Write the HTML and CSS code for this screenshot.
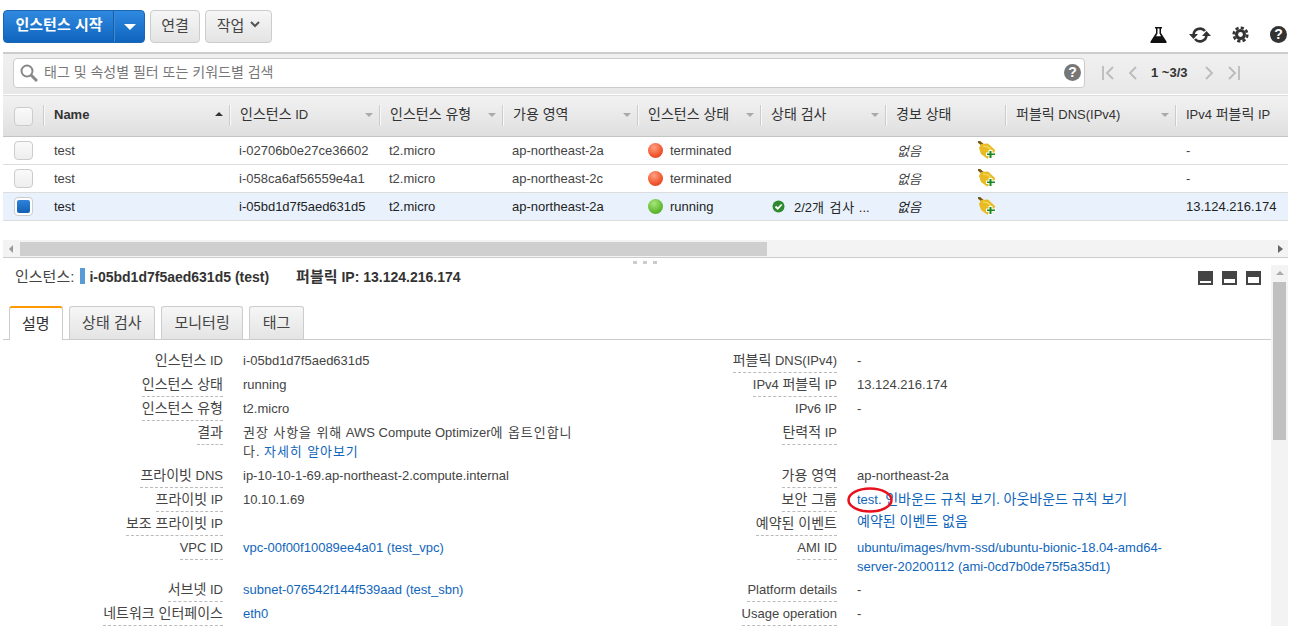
FILE: index.html
```html
<!DOCTYPE html>
<html lang="ko">
<head>
  <meta charset="UTF-8">
  <title>인스턴스</title>
  <link rel="stylesheet" href="styles.css">
</head>
<body>
  <svg class="defs" width="0" height="0">
    <symbol id="broom" viewBox="0 0 18 18">
      <path d="M0 0l6 5" stroke="#7a5a10" stroke-width="2.800"/>
      <path d="M3 3l7-.5 7 6.500-1 6-7 2.500-6-4.500-2-6z" fill="#e9bb22"/>
      <path d="M5 5l5 1 3 3" fill="none" stroke="#f7dc68" stroke-width="1.200"/>
      <path d="M10.500 9h4v2.500H18V15h-3.500v3h-4v-3H8v-3.500h2.500z" fill="#fff"/>
      <path d="M11.500 10h2v2.500H17V14h-3.500v3h-2v-3H9v-1.500h2.500z" fill="#168a1e"/>
    </symbol>
  </svg>

  <div class="console">
    <div class="toolbar">
      <div class="actions">
        <div class="btn-split">
          <span class="btn-main">인스턴스 시작</span>
          <span class="btn-caret"><i class="caret-white"></i></span>
        </div>
        <span class="btn btn-connect">연결</span>
        <span class="btn btn-action">작업
          <svg class="chevron" width="10" height="7" viewBox="0 0 10 7"><path d="M1 1l4 4 4-4" fill="none" stroke="#555" stroke-width="2"/></svg>
        </span>
      </div>
      <div class="tools">
        <svg class="flask" width="17" height="17" viewBox="0 0 17 17"><path d="M5 1h7v1.500h-1V7l5.500 8.500V17H.5v-1.500L6 7V2.500H5z" fill="#111"/><path d="M7.500 2.500h2V7.500l1.500 2.700H6l1.500-2.700z" fill="#fff"/></svg>
        <svg width="22" height="18" viewBox="0 0 22 18"><path d="M4.500 9a6.500 6.500 0 0 1 11.500-4" fill="none" stroke="#333" stroke-width="2.600"/><path d="M17.500 9a6.500 6.500 0 0 1-11.500 4" fill="none" stroke="#333" stroke-width="2.600"/><path d="M0 8h9l-4.500 5zM22 10h-9l4.500-5z" fill="#333"/></svg>
        <svg width="17" height="17" viewBox="0 0 17 17"><circle cx="8.500" cy="8.500" r="5.500" fill="#333"/><circle cx="8.500" cy="8.500" r="6.800" fill="none" stroke="#333" stroke-width="2.600" stroke-dasharray="3.200 2.140"/><circle cx="8.500" cy="8.500" r="2.400" fill="#fff"/></svg>
        <span class="help">?</span>
      </div>
    </div>

    <div class="filter-bar">
      <div class="search">
        <svg width="18" height="18" viewBox="0 0 18 18"><circle cx="7" cy="7" r="5.500" fill="none" stroke="#888" stroke-width="2"/><path d="M11 11l6 6" stroke="#888" stroke-width="3"/></svg>
        <span class="placeholder">태그 및 속성별 필터 또는 키워드별 검색</span>
        <span class="help help-grey">?</span>
      </div>
      <div class="pager">
        <svg width="12" height="14" viewBox="0 0 12 14"><path d="M1 0v14M11 1L5 7l6 6" fill="none" stroke="#bbb" stroke-width="1.800"/></svg>
        <svg width="9" height="14" viewBox="0 0 9 14"><path d="M8 1L2 7l6 6" fill="none" stroke="#bbb" stroke-width="1.800"/></svg>
        <span class="pager-count">1 ~3/3</span>
        <svg width="9" height="14" viewBox="0 0 9 14"><path d="M1 1l6 6-6 6" fill="none" stroke="#bbb" stroke-width="1.800"/></svg>
        <svg width="12" height="14" viewBox="0 0 12 14"><path d="M11 0v14M1 1l6 6-6 6" fill="none" stroke="#bbb" stroke-width="1.800"/></svg>
      </div>
    </div>

    <div class="table-head cols">
      <div class="th th-check"><i class="check"></i></div>
      <div class="th th-name">Name<i class="sort-up"></i></div>
      <div class="th"><span class="ko">인스턴스</span> ID<i class="sort"></i></div>
      <div class="th"><span class="ko">인스턴스 유형</span><i class="sort"></i></div>
      <div class="th"><span class="ko">가용 영역</span><i class="sort"></i></div>
      <div class="th"><span class="ko">인스턴스 상태</span><i class="sort"></i></div>
      <div class="th"><span class="ko">상태 검사</span><i class="sort"></i></div>
      <div class="th"><span class="ko">경보 상태</span></div>
      <div class="th"><span class="ko">퍼블릭</span> DNS(IPv4)<i class="sort"></i></div>
      <div class="th">IPv4 <span class="ko">퍼블릭</span> IP</div>
    </div>

    <div class="table-row cols">
      <div class="td td-check"><i class="check"></i></div>
      <div class="td td-name">test</div>
      <div class="td">i-02706b0e27ce36602</div>
      <div class="td">t2.micro</div>
      <div class="td">ap-northeast-2a</div>
      <div class="td td-state"><i class="dot dot-red"></i>terminated</div>
      <div class="td"></div>
      <div class="td td-alarm"><em>없음</em><svg class="broom" width="18" height="18"><use href="#broom"/></svg></div>
      <div class="td"></div>
      <div class="td td-ip">-</div>
    </div>
    <div class="table-row cols">
      <div class="td td-check"><i class="check"></i></div>
      <div class="td td-name">test</div>
      <div class="td">i-058ca6af56559e4a1</div>
      <div class="td">t2.micro</div>
      <div class="td">ap-northeast-2c</div>
      <div class="td td-state"><i class="dot dot-red"></i>terminated</div>
      <div class="td"></div>
      <div class="td td-alarm"><em>없음</em><svg class="broom" width="18" height="18"><use href="#broom"/></svg></div>
      <div class="td"></div>
      <div class="td td-ip">-</div>
    </div>
    <div class="table-row table-row-on cols">
      <div class="td td-check"><i class="check check-on"></i></div>
      <div class="td td-name">test</div>
      <div class="td">i-05bd1d7f5aed631d5</div>
      <div class="td">t2.micro</div>
      <div class="td">ap-northeast-2a</div>
      <div class="td td-state"><i class="dot dot-green"></i>running</div>
      <div class="td td-status"><svg width="13" height="13" viewBox="0 0 13 13"><circle cx="6.500" cy="6.500" r="6" fill="#2f8a2f"/><path d="M3.500 6.500l2.200 2.200 4-4.200" fill="none" stroke="#fff" stroke-width="1.800"/></svg><span>2/2<span class="ko-wide">개 검사</span> ...</span></div>
      <div class="td td-alarm"><em>없음</em><svg class="broom" width="18" height="18"><use href="#broom"/></svg></div>
      <div class="td"></div>
      <div class="td td-ip">13.124.216.174</div>
    </div>

    <div class="hscroll">
      <i class="arrow-left"></i>
      <div class="hscroll-thumb"></div>
      <i class="arrow-right"></i>
    </div>

    <div class="detail">
      <div class="grip"><i></i><i></i><i></i></div>
      <div class="detail-main">
        <div class="detail-title">
          <span class="title-text">
            <span class="ko-title">인스턴스:</span><i class="title-mark"></i><b>i-05bd1d7f5aed631d5 (test)</b>
            <b class="title-ip"><span class="ko-title">퍼블릭</span> IP: 13.124.216.174</b>
          </span>
          <span class="panes">
            <i class="pane pane-sm"></i><i class="pane pane-md"></i><i class="pane pane-lg"></i>
          </span>
        </div>

        <div class="tabs">
          <span class="tab tab-on">설명</span>
          <span class="tab">상태 검사</span>
          <span class="tab">모니터링</span>
          <span class="tab">태그</span>
        </div>

        <div class="info">
          <div class="key"><span><span class="ko">인스턴스</span> ID</span></div>
          <div class="val">i-05bd1d7f5aed631d5</div>
          <div class="key"><span class="dash"><span class="ko">퍼블릭</span> DNS(IPv4)</span></div>
          <div class="val">-</div>

          <div class="key"><span class="dash ko">인스턴스 상태</span></div>
          <div class="val">running</div>
          <div class="key"><span class="dash">IPv4 <span class="ko">퍼블릭</span> IP</span></div>
          <div class="val">13.124.216.174</div>

          <div class="key"><span class="dash ko">인스턴스 유형</span></div>
          <div class="val">t2.micro</div>
          <div class="key"><span>IPv6 IP</span></div>
          <div class="val">-</div>

          <div class="key"><span class="dash ko">결과</span></div>
          <div class="val"><span class="ko-wide">권장 사항을 위해</span> AWS Compute Optimizer<span class="ko-wide">에 옵트인합니다.</span> <a class="ko-wide">자세히 알아보기</a></div>
          <div class="key"><span class="dash"><span class="ko">탄력적</span> IP</span></div>
          <div class="val"></div>

          <div class="key"><span class="dash"><span class="ko">프라이빗</span> DNS</span></div>
          <div class="val">ip-10-10-1-69.ap-northeast-2.compute.internal</div>
          <div class="key"><span class="dash ko">가용 영역</span></div>
          <div class="val">ap-northeast-2a</div>

          <div class="key"><span class="dash"><span class="ko">프라이빗</span> IP</span></div>
          <div class="val">10.10.1.69</div>
          <div class="key"><span class="dash ko">보안 그룹</span></div>
          <div class="val"><a class="circled">test.<svg class="red-ring" width="48" height="28" viewBox="0 0 48 28"><ellipse cx="24" cy="14" rx="21.500" ry="11.500" fill="none" stroke="#e8101c" stroke-width="2.500"/></svg></a> <a class="ko">인바운드 규칙 보기.</a> <a class="ko">아웃바운드 규칙 보기</a></div>

          <div class="key"><span class="dash"><span class="ko">보조 프라이빗</span> IP</span></div>
          <div class="val"></div>
          <div class="key"><span class="dash ko">예약된 이벤트</span></div>
          <div class="val val-up"><a class="ko">예약된 이벤트 없음</a></div>

          <div class="key"><span class="dash">VPC ID</span></div>
          <div class="val"><a>vpc-00f00f10089ee4a01 (test_vpc)</a></div>
          <div class="key"><span class="dash">AMI ID</span></div>
          <div class="val val-tight"><a>ubuntu/images/hvm-ssd/ubuntu-bionic-18.04-amd64-server-20200112 (ami-0cd7b0de75f5a35d1)</a></div>

          <div class="key"><span class="dash"><span class="ko">서브넷</span> ID</span></div>
          <div class="val"><a>subnet-076542f144f539aad (test_sbn)</a></div>
          <div class="key"><span class="dash">Platform details</span></div>
          <div class="val">-</div>

          <div class="key"><span class="dash ko">네트워크 인터페이스</span></div>
          <div class="val"><a>eth0</a></div>
          <div class="key"><span class="dash">Usage operation</span></div>
          <div class="val">-</div>
        </div>
      </div>

      <div class="vscroll">
        <i class="arrow-up"></i>
        <div class="vscroll-thumb"></div>
      </div>
    </div>
  </div>
</body>
</html>
```
FILE: styles.css
```css
html, body {
  height: 100%;
}

body {
  margin: 0;
  overflow: hidden;
  background: #fff;
  color: #444;
  font-family: "Liberation Sans", "Noto Sans CJK KR", sans-serif;
  font-size: 13px;
}

i {
  display: block;
}

a {
  color: #1166bb;
}

/* korean text runs a size up from the latin next to it */
.ko {
  font-size: 14px;
}

/* same width as .ko, for wrapped lines and tight rows */
.ko-wide {
  letter-spacing: .92px;
}

.ko-title {
  font-size: 15px;
}

.defs {
  position: absolute;
}

.console {
  width: 1285px;
  margin-left: 3px;
}

/* top buttons */
.toolbar {
  display: flex;
  justify-content: space-between;
  height: 52px;
  box-sizing: border-box;
  padding-top: 10px;
}

.actions {
  display: flex;
  gap: 5px;
  height: 33px;
}

.btn-split {
  display: flex;
  width: 142px;
  color: #fff;
  font-size: 15px;
  font-weight: bold;
  line-height: 27px;
  background: linear-gradient(#3089e0, #0f65bd);
  border: 1px solid #1a66b0;
  border-radius: 4px;
  box-sizing: border-box;
}

.btn-main {
  width: 108px;
  padding-left: 1px;
  text-align: center;
  white-space: nowrap;
  border-right: 1px solid #175ea8;
}

.btn-caret {
  flex: 1;
  display: flex;
  align-items: center;
  justify-content: center;
  border-left: 1px solid #3b8ad8;
}

.caret-white {
  border: 6px solid transparent;
  border-top: 6px solid #fff;
  border-bottom: 0;
}

.btn {
  display: flex;
  align-items: center;
  justify-content: center;
  gap: 6px;
  box-sizing: border-box;
  padding-bottom: 4px;
  color: #444;
  font-size: 15px;
  background: linear-gradient(#f6f6f6, #e4e4e4);
  border: 1px solid #ccc;
  border-radius: 4px;
}

.btn-connect {
  width: 50px;
}

.btn-action {
  width: 67px;
}

.tools {
  display: flex;
  align-items: flex-start;
  gap: 21px;
  padding: 16px 1px 0 0;
}

.flask {
  margin-right: 1px;
}

.help {
  display: block;
  width: 17px;
  height: 17px;
  color: #fff;
  font-size: 14px;
  font-weight: bold;
  line-height: 17px;
  text-align: center;
  background: #333;
  border-radius: 50%;
}

.help-grey {
  background: #777;
}

/* filter row */
.filter-bar {
  display: flex;
  align-items: center;
  height: 42px;
  box-sizing: border-box;
  padding: 0 0 3px 10px;
  background: linear-gradient(#f0f0f0, #e8e8e8);
  border-top: 2px solid #ccc;
}

.search {
  display: flex;
  align-items: center;
  width: 1072px;
  height: 30px;
  box-sizing: border-box;
  padding: 0 3px 0 6px;
  background: #fff;
  border: 1px solid #ccc;
  border-radius: 4px;
}

.placeholder {
  flex: 1;
  margin-left: 6px;
  padding-bottom: 3px;
  color: #777;
  font-size: 14px;
}

.pager {
  display: flex;
  align-items: center;
  gap: 14px;
  margin-left: 17px;
}

.pager-count {
  width: 39px;
  margin-right: 1px;
  color: #333;
  font-weight: bold;
  white-space: nowrap;
}

/* instance table */
.cols {
  display: grid;
  grid-template-columns: 40px 186px 150px 123px 135px 123px 125px 120px 170px 1fr;
}

.table-head {
  height: 42px;
  box-sizing: border-box;
  margin-top: 1px;
  background: linear-gradient(#f2f2f2, #dfdfdf);
  border-top: 1px solid #ddd;
  border-bottom: 1px solid #c4c4c4;
}

.th {
  position: relative;
  padding-left: 11px;
  color: #333;
  line-height: 36px;
  white-space: nowrap;
}

.th::before {
  content: "";
  position: absolute;
  left: 0;
  top: 9px;
  bottom: 10px;
  width: 1px;
  background: #ccc;
  box-shadow: 1px 0 0 #f8f8f8;
}

.th-check {
  display: flex;
  align-items: center;
}

.th-check::before {
  display: none;
}

.th-name {
  padding-top: 1px;
  font-weight: bold;
}

.sort,
.sort-up {
  position: absolute;
  right: 6px;
  top: 17px;
  border: 4px solid transparent;
  border-top: 4px solid #aaa;
  border-bottom: 0;
}

.sort-up {
  top: 16px;
  border-top: 0;
  border-bottom: 4px solid #333;
}

.check {
  width: 19px;
  height: 19px;
  box-sizing: border-box;
  background: linear-gradient(#fafafa, #eee);
  border: 1px solid #ccc;
  border-radius: 4px;
}

.check-on {
  background: #fff;
  padding: 2px;
}

.check-on::before {
  content: "";
  display: block;
  width: 13px;
  height: 13px;
  background: linear-gradient(#2f83da, #1160b4);
  border-radius: 2px;
}

.table-row {
  height: 28px;
  box-sizing: border-box;
  border-bottom: 1px solid #ddd;
}

.table-row-on {
  background: #e9f2fc;
  color: #222;
}

.td {
  display: flex;
  align-items: center;
  padding-left: 10px;
  white-space: nowrap;
}

.td-check,
.td-name,
.td-state,
.td-ip {
  padding-left: 11px;
}

.dot {
  width: 15px;
  height: 15px;
  margin-right: 7px;
  border-radius: 50%;
}

.dot-red {
  background: radial-gradient(circle at 40% 30%, #ffa183, #f0552c 60%, #d0401c);
}

.dot-green {
  background: radial-gradient(circle at 40% 30%, #a6e67a, #62ba32 60%, #4a9f22);
}

.td-status {
  gap: 9px;
  padding-left: 12px;
}

.td-alarm {
  padding-left: 12px;
}

.td-alarm em {
  width: 81px;
  font-size: 13px;
}

.broom {
  margin-top: -1px;
}

/* bottom scrollbar of the table */
.hscroll {
  display: flex;
  align-items: center;
  height: 18px;
  box-sizing: border-box;
  margin-top: 19px;
  background: #f3f3f3;
  border-bottom: 1px solid #ccc;
}

.hscroll-thumb {
  width: 747px;
  height: 14px;
  margin-left: 7px;
  background: #cfcfcf;
}

.arrow-left {
  margin-left: 6px;
  border: 4px solid transparent;
  border-right: 4px solid #999;
  border-left: 0;
}

.arrow-right {
  margin-left: auto;
  margin-right: 5px;
  border: 4px solid transparent;
  border-left: 5px solid #666;
  border-right: 0;
}

/* details pane */
.detail {
  position: relative;
  display: flex;
  height: 369px;
}

.grip {
  position: absolute;
  left: 630px;
  top: 3px;
  display: flex;
  gap: 6px;
}

.grip i {
  width: 4px;
  height: 3px;
  background: #ccc;
}

.detail-main {
  width: 1268px;
}

.detail-title {
  display: flex;
  justify-content: space-between;
  align-items: center;
  height: 38px;
  box-sizing: border-box;
  padding: 0 10px 0 12px;
  font-size: 14px;
}

.title-text {
  display: flex;
  align-items: baseline;
  gap: 4px;
  margin-bottom: 3px;
  white-space: nowrap;
}

.title-mark {
  align-self: center;
  width: 5px;
  height: 16px;
  margin-left: 2px;
  background: #5b9bd5;
}

.title-text b {
  color: #333;
}

.title-ip {
  margin-left: 23px;
}

.panes {
  display: flex;
  gap: 9px;
  padding-top: 2px;
}

.pane {
  position: relative;
  width: 15px;
  height: 14px;
  background: #444;
}

.pane::after {
  content: "";
  position: absolute;
  left: 2px;
  right: 2px;
  bottom: 2px;
  background: #fff;
}

.pane-sm::after {
  height: 2px;
}

.pane-md::after {
  height: 4px;
}

.pane-lg::after {
  height: 6px;
}

.tabs {
  display: flex;
  gap: 6px;
  box-sizing: border-box;
  margin-top: 10px;
  padding-left: 6px;
  height: 34px;
  border-bottom: 1px solid #ccc;
}

.tab {
  height: 33px;
  box-sizing: border-box;
  padding: 0 12.500px;
  font-size: 15px;
  line-height: 31px;
  white-space: nowrap;
  background: linear-gradient(#f6f6f6, #e4e4e4);
  border: 1px solid #ccc;
  border-bottom: 0;
  border-radius: 3px 3px 0 0;
}

.tab-on {
  height: 34px;
  padding: 0 12px;
  color: #333;
  background: #fff;
  border-top: 2px solid #f90;
}

.info {
  display: grid;
  grid-template-columns: 220px 355px 259px 330px;
  margin-top: 9px;
}

.key {
  padding-top: 2px;
  text-align: right;
  line-height: 19px;
  height: 22px;
}

.key span {
  display: inline-block;
  padding-bottom: 2px;
}

.key span span {
  display: inline;
  padding: 0;
}

.key .dash {
  border-bottom: 1px dashed #bbb;
}

.val {
  padding: 2px 0 3px 20px;
  line-height: 19px;
}

.val-tight {
  padding-bottom: 2px;
}

.val-up {
  padding: 0 0 5px 20px;
}

.circled {
  position: relative;
}

.red-ring {
  position: absolute;
  left: -11px;
  top: -6px;
}

.vscroll {
  width: 17px;
  height: 361px;
  margin-top: 7px;
  background: #f3f3f3;
}

.arrow-up {
  width: 0;
  margin: 6px auto 0;
  border: 4px solid transparent;
  border-bottom: 4px solid #aaa;
  border-top: 0;
}

.vscroll-thumb {
  width: 13px;
  height: 158px;
  margin: 7px 2px 0;
  background: #c0c0c0;
}
```
